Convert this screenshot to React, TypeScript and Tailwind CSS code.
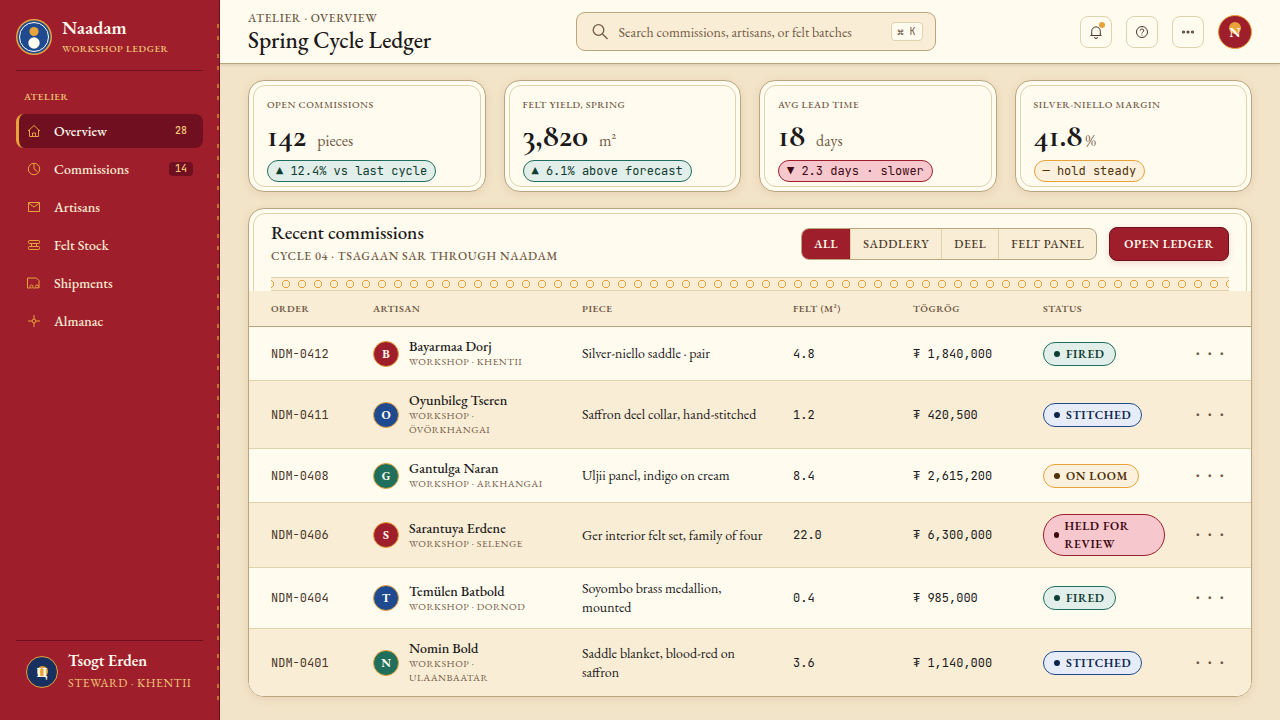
import React, { useState } from 'react';

type Tone = 'jade' | 'indigo' | 'saffron' | 'blood';
type AvatarColor = 'red' | 'blue' | 'green';

interface NavItem {
  label: string;
  icon: React.ReactNode;
  count?: number;
}

interface Stat {
  label: string;
  value: string;
  unit: string;
  tight?: boolean;
  trend: string;
  tone: Tone;
}

interface Commission {
  id: string;
  artisan: string;
  workshop: string;
  color: AvatarColor;
  piece: string;
  felt: string;
  price: string;
  status: string;
  tone: Tone;
}

const toneClass: Record<Tone, string> = {
  jade: 'border-[#1f6f5c] bg-[#e2eeea] text-[#0f3d31]',
  indigo: 'border-[#1f4a8f] bg-[#e6edf8] text-[#10244d]',
  saffron: 'border-[#e8a33a] bg-[#fdf1de] text-[#4f3208]',
  blood: 'border-[#9e1f2b] bg-[#f6c8ce] text-[#3f0812]',
};

const avatarClass: Record<AvatarColor, string> = {
  red: 'bg-[#9e1f2b]',
  blue: 'bg-[#1f4a8f]',
  green: 'bg-[#1f6f5c]',
};

const NavIcon = ({ children }: { children: React.ReactNode }) => (
  <svg width="14" height="14" viewBox="0 0 14 14" fill="none" stroke="currentColor" strokeWidth="1" className="shrink-0 text-[#e8a33a]" aria-hidden="true">
    {children}
  </svg>
);

const navItems: NavItem[] = [
  {
    label: 'Overview',
    count: 28,
    icon: <NavIcon><path d="M1 7 7 1.500 13 7M2.500 6v6.500h9V6M5.500 12.500V9h3v3.500" /></NavIcon>,
  },
  {
    label: 'Commissions',
    count: 14,
    icon: <NavIcon><circle cx="7" cy="7" r="5.700" /><path d="M7 1.300V7l3.500 2.500" /></NavIcon>,
  },
  {
    label: 'Artisans',
    icon: <NavIcon><path d="M1.500 2.500h11v9h-11zM1.500 3l5.500 4 5.500-4" /></NavIcon>,
  },
  {
    label: 'Felt Stock',
    icon: (
      <NavIcon>
        <rect x="1.500" y="2.500" width="11" height="3" rx="0.800" />
        <rect x="1.500" y="8.500" width="11" height="3" rx="0.800" />
        <path d="M4.500 5.500v3M9.500 5.500v3" />
      </NavIcon>
    ),
  },
  {
    label: 'Shipments',
    icon: (
      <NavIcon>
        <path d="M3 12H.5V2H9.500l2.500 2.500V12h-.5M6 12h2.500" />
        <circle cx="4.500" cy="10.500" r="1.500" />
        <circle cx="10" cy="10.500" r="1.500" />
      </NavIcon>
    ),
  },
  {
    label: 'Almanac',
    icon: <NavIcon><circle cx="7" cy="7" r="1.900" /><path d="M7 1v4M7 9v4M1 7h4M9 7h4" /></NavIcon>,
  },
];

const stats: Stat[] = [
  { label: 'Open commissions', value: '142', unit: 'pieces', trend: '▲ 12.4% vs last cycle', tone: 'jade' },
  { label: 'Felt yield, spring', value: '3,820', unit: 'm²', trend: '▲ 6.1% above forecast', tone: 'jade' },
  { label: 'Avg lead time', value: '18', unit: 'days', trend: '▼ 2.3 days · slower', tone: 'blood' },
  { label: 'Silver-niello margin', value: '41.8', unit: '%', tight: true, trend: '— hold steady', tone: 'saffron' },
];

const filters = ['All', 'Saddlery', 'Deel', 'Felt panel'];

const commissions: Commission[] = [
  { id: 'NDM-0412', artisan: 'Bayarmaa Dorj', workshop: 'Khentii', color: 'red', piece: 'Silver-niello saddle · pair', felt: '4.8', price: '1,840,000', status: 'Fired', tone: 'jade' },
  { id: 'NDM-0411', artisan: 'Oyunbileg Tseren', workshop: 'Övörkhangai', color: 'blue', piece: 'Saffron deel collar, hand-stitched', felt: '1.2', price: '420,500', status: 'Stitched', tone: 'indigo' },
  { id: 'NDM-0408', artisan: 'Gantulga Naran', workshop: 'Arkhangai', color: 'green', piece: 'Uljii panel, indigo on cream', felt: '8.4', price: '2,615,200', status: 'On loom', tone: 'saffron' },
  { id: 'NDM-0406', artisan: 'Sarantuya Erdene', workshop: 'Selenge', color: 'red', piece: 'Ger interior felt set, family of four', felt: '22.0', price: '6,300,000', status: 'Held for review', tone: 'blood' },
  { id: 'NDM-0404', artisan: 'Temülen Batbold', workshop: 'Dornod', color: 'blue', piece: 'Soyombo brass medallion, mounted', felt: '0.4', price: '985,000', status: 'Fired', tone: 'jade' },
  { id: 'NDM-0401', artisan: 'Nomin Bold', workshop: 'Ulaanbaatar', color: 'green', piece: 'Saddle blanket, blood-red on saffron', felt: '3.6', price: '1,140,000', status: 'Stitched', tone: 'indigo' },
];

const Sidebar = ({ active, onSelect }: { active: string; onSelect: (label: string) => void }) => (
  <aside className="relative flex w-[220px] shrink-0 flex-col border-r border-[#6f0f1f] bg-[#9e1f2b] px-4 text-[#fffbef]">
    {/* saddle stitch along the right edge */}
    <div className="absolute top-6 right-0 bottom-5 w-[2px] bg-[repeating-linear-gradient(to_bottom,#c7702f_0_4px,transparent_4px_12px,#c7702f_12px_16px,transparent_16px_30px)]" />

    <div className="flex items-center gap-[10px] border-b border-[#6f0f1f] pt-4 pb-3">
      <svg width="36" height="36" viewBox="0 0 36 36" className="shrink-0" aria-hidden="true">
        <circle cx="18" cy="18" r="18" fill="#e8a33a" />
        <circle cx="18" cy="18" r="16.500" fill="#1f4a8f" />
        <circle cx="18" cy="18" r="14.500" fill="none" stroke="#fffbef" strokeWidth="1" />
        <circle cx="18" cy="12.500" r="4.600" fill="#e8a33a" />
        <circle cx="18" cy="24" r="5.700" fill="#fffbef" />
      </svg>
      <div>
        <div className="text-[19px] leading-6 font-semibold">Naadam</div>
        <div className="text-[10px] leading-[18px] font-medium tracking-wider text-[#f2c879] uppercase">Workshop Ledger</div>
      </div>
    </div>

    <div className="px-2 pt-4 pb-[7px] text-[10px] leading-5 font-medium tracking-wider text-[#f2c879] uppercase">Atelier</div>
    <nav className="flex flex-col gap-1">
      {navItems.map((item) => (
        <a
          key={item.label}
          href="#"
          onClick={() => onSelect(item.label)}
          className={`flex h-[34px] items-center gap-[13px] rounded-lg border-l-[3px] pr-[10px] pl-2 text-sm font-medium ${
            active === item.label ? 'border-[#e8a33a] bg-[#6f0f1f] text-[#fffbef]' : 'border-transparent text-[#f9edd5]'
          }`}
        >
          {item.icon}
          <span className="flex-1">{item.label}</span>
          {item.count && (
            <span className="rounded bg-[#6f0f1f] px-[6px] font-['JetBrains_Mono','Liberation_Mono',monospace] text-[10px] leading-[14px] text-[#f2c879]">
              {item.count}
            </span>
          )}
        </a>
      ))}
    </nav>

    <div className="mt-auto flex items-center gap-[10px] border-t border-[#6f0f1f] px-[10px] pt-[9px] pb-[26px]">
      <div className="relative grid size-8 shrink-0 place-items-center rounded-full border border-[#e8a33a] bg-[#17305f]">
        <span className="absolute top-[9px] size-[11px] rounded-full bg-[#e8a33a]" />
        <span className="relative text-sm leading-none font-bold">Ц</span>
      </div>
      <div className="whitespace-nowrap">
        <div className="text-base leading-[22px] font-semibold">Tsogt Erden</div>
        <div className="text-xs leading-[22px] tracking-wider text-[#f2c879] uppercase">Steward · Khentii</div>
      </div>
    </div>
  </aside>
);

const iconButton = 'relative grid size-8 place-items-center rounded-lg border border-[#e0d2ad] text-[#4a3728]';

const Header = () => (
  <header className="relative flex h-16 items-center justify-between border-b border-[#b9a67e] bg-[#fffbef] px-7 shadow-[0_1px_3px_rgba(74,55,40,0.15)]">
    <div>
      <div className="text-xs leading-4 font-medium tracking-wider text-[#725a45] uppercase">Atelier · Overview</div>
      <h1 className="text-[23px] leading-7 font-medium text-[#1c1a1a]">Spring Cycle Ledger</h1>
    </div>

    <label className="flex h-[39px] w-[360px] items-center gap-[10px] rounded-[9px] border border-[#b9a67e] bg-[#f9edd5] pr-3 pl-[15px] text-[#725a45]">
      <svg width="17" height="17" viewBox="0 0 17 17" fill="none" stroke="currentColor" strokeWidth="1.300" aria-hidden="true">
        <circle cx="6.500" cy="7" r="5.300" />
        <path d="m10.500 11 5 5" />
      </svg>
      <input
        type="search"
        aria-label="Search"
        placeholder="Search commissions, artisans, or felt batches"
        className="min-w-0 flex-1 bg-transparent text-sm outline-none placeholder:text-[#725a45]"
      />
      <kbd className="rounded border border-[#e0d2ad] bg-[#fffbef] px-[6px] font-['JetBrains_Mono','Liberation_Mono',monospace] text-[10px] leading-[17px]">⌘ K</kbd>
    </label>

    <div className="flex items-center gap-[14px]">
      <button type="button" aria-label="Notifications" className={iconButton}>
        <svg width="14" height="14" viewBox="0 0 14 14" fill="none" stroke="currentColor" strokeWidth="1">
          <path d="M1.500 10.500h11M2.700 10.500V6.200a4.300 4.300 0 0 1 8.600 0v4.300M5.500 12a1.500 1.500 0 0 0 3 0" />
        </svg>
        <span className="absolute top-[5px] right-[6px] size-[6px] rounded-full bg-[#e8a33a]" />
      </button>
      <button type="button" aria-label="Help" className={iconButton}>
        <svg width="14" height="14" viewBox="0 0 14 14" fill="none" stroke="currentColor" strokeWidth="1">
          <circle cx="7" cy="7" r="5.500" />
          <path d="M5.300 5.600a1.700 1.700 0 1 1 2.500 1.500c-.6.300-.8.600-.8 1.300M7 9.600v.9" />
        </svg>
      </button>
      <button type="button" aria-label="More" className={iconButton}>
        <svg width="14" height="14" viewBox="0 0 14 14" fill="none" stroke="currentColor" strokeWidth="1.100">
          <circle cx="2.500" cy="7" r="1" />
          <circle cx="7" cy="7" r="1" />
          <circle cx="11.500" cy="7" r="1" />
        </svg>
      </button>
      <div className="relative grid size-[34px] place-items-center rounded-full border border-[#e8a33a] bg-[#9e1f2b]">
        <span className="absolute top-[6px] size-3 rounded-full bg-[#e8a33a]" />
        <span className="relative text-sm leading-none font-bold text-[#fffbef]">N</span>
      </div>
    </div>
  </header>
);

const StatCard = ({ stat }: { stat: Stat }) => (
  <section className="relative rounded-2xl border border-[#b9a67e] bg-[#fffbef] px-[18px] pt-4 pb-[7px] shadow-[0_2px_8px_rgba(158,80,40,0.12)]">
    <div className="pointer-events-none absolute inset-1 rounded-xl border border-[#e0d2ad]" />
    <h2 className="text-[10px] leading-4 font-medium tracking-wider text-[#725a45] uppercase">{stat.label}</h2>
    <div className={`flex items-baseline pt-[2px] pb-[3px] ${stat.tight ? 'gap-[3px]' : 'gap-[11px]'}`}>
      <span className="font-['Cormorant_Garamond','EB_Garamond','Liberation_Serif',serif] text-[33px] leading-[42px] font-bold text-[#1c1a1a]">{stat.value}</span>
      <span className="text-base text-[#725a45]">{stat.unit}</span>
    </div>
    <span className={`inline-block rounded-full border px-2 align-top font-['JetBrains_Mono','Liberation_Mono',monospace] text-xs leading-5 whitespace-nowrap ${toneClass[stat.tone]}`}>
      {stat.trend}
    </span>
  </section>
);

const CommissionRow = ({ row }: { row: Commission }) => (
  <tr className="border-b border-[#e0d2ad] last:border-b-0 even:bg-[#f9edd5]">
    <td className="py-[11px] pr-3 pl-[22px] font-['JetBrains_Mono','Liberation_Mono',monospace] text-xs text-[#4a3728]">{row.id}</td>
    <td className="py-[11px] pr-5 pl-3">
      <div className="flex items-center gap-[10px]">
        <span className={`grid size-[26px] shrink-0 place-items-center rounded-full border border-[#e8a33a] text-xs leading-none font-bold text-[#fffbef] ${avatarClass[row.color]}`}>
          {row.artisan[0]}
        </span>
        <div>
          <div className="text-sm leading-[17px] font-medium">{row.artisan}</div>
          <div className="text-[10px] leading-[14px] tracking-wider text-[#725a45] uppercase">Workshop · {row.workshop}</div>
        </div>
      </div>
    </td>
    <td className="px-3 py-[11px] text-sm leading-[19px]">{row.piece}</td>
    <td className="px-3 py-[11px] font-['JetBrains_Mono','Liberation_Mono',monospace] text-xs">{row.felt}</td>
    <td className="px-3 py-[11px] font-['JetBrains_Mono','Liberation_Mono',monospace] text-xs">₮ {row.price}</td>
    <td className="px-3 py-[11px]">
      <span className={`inline-flex items-center gap-[6px] rounded-3xl border px-[10px] py-[2px] align-top text-xs leading-[18px] font-semibold tracking-wider uppercase ${toneClass[row.tone]}`}>
        <span className="size-[6px] rounded-full bg-current" />
        {row.status}
      </span>
    </td>
    <td className="py-[11px] pr-[22px] text-right">
      <button type="button" aria-label={`Actions for ${row.id}`} className="font-['JetBrains_Mono','Liberation_Mono',monospace] text-base leading-4 tracking-[0.15em] whitespace-nowrap text-[#725a45]">
        ···
      </button>
    </td>
  </tr>
);

const App: React.FC = () => {
  const [activeNav, setActiveNav] = useState('Overview');
  const [filter, setFilter] = useState('All');

  return (
    <div className="flex min-h-screen bg-[#f2e4c8] font-['EB_Garamond','Liberation_Serif',serif] text-[#1c1a1a]">
      <Sidebar active={activeNav} onSelect={setActiveNav} />
      <div className="min-w-0 flex-1">
        <Header />
        <main className="flex flex-col gap-4 px-7 pt-4 pb-5">
          <div className="grid grid-cols-4 gap-[18px]">
            {stats.map((stat) => <StatCard key={stat.label} stat={stat} />)}
          </div>

          <section className="relative overflow-hidden rounded-2xl border border-[#b9a67e] bg-[#fffbef] shadow-[0_2px_8px_rgba(158,80,40,0.12)]">
            <div className="pointer-events-none absolute inset-1 rounded-xl border border-[#e0d2ad]" />
            <div className="relative px-[22px]">
              <div className="flex items-center justify-between pt-3 pb-[10px]">
                <div>
                  <h2 className="text-[19px] leading-6 font-medium">Recent commissions</h2>
                  <p className="text-xs leading-[22px] font-medium tracking-wider text-[#725a45] uppercase lining-nums">Cycle 04 · Tsagaan Sar through Naadam</p>
                </div>
                <div className="flex items-center gap-3">
                  <div className="flex divide-x divide-[#e0d2ad] overflow-hidden rounded-lg border border-[#b9a67e] bg-[#f9edd5]">
                    {filters.map((name) => (
                      <button
                        key={name}
                        type="button"
                        onClick={() => setFilter(name)}
                        className={`px-3 text-xs leading-[30px] tracking-wider uppercase ${
                          filter === name ? 'bg-[#9e1f2b] font-semibold text-[#fffbef]' : 'font-medium text-[#4a3728]'
                        }`}
                      >
                        {name}
                      </button>
                    ))}
                  </div>
                  <button type="button" className="rounded-lg border border-[#6f0f1f] bg-[#9e1f2b] px-[14px] text-xs leading-8 font-semibold tracking-wider text-[#fffbef] uppercase shadow-[0_2px_6px_rgba(158,31,43,0.15)]">
                    Open ledger
                  </button>
                </div>
              </div>
              <div className="h-[14px] border-y border-[#e0d2ad] bg-[#f9edd5] bg-[radial-gradient(circle,transparent_3px,#e8a33a_3px,#e8a33a_4px,transparent_4px)] bg-[length:16px_12px] bg-center" />
            </div>

            <table className="relative w-full table-fixed text-left">
              <colgroup>
                <col className="w-28" />
                <col className="w-[209px]" />
                <col />
                <col className="w-[120px]" />
                <col className="w-[130px]" />
                <col className="w-[146px]" />
                <col className="w-[74px]" />
              </colgroup>
              <thead className="border-b border-[#b9a67e] bg-[#f9edd5] text-[10px] leading-[35px] tracking-wider text-[#725a45] uppercase lining-nums">
                <tr>
                  <th className="pr-3 pl-[22px] font-semibold">Order</th>
                  <th className="px-3 font-semibold">Artisan</th>
                  <th className="px-3 font-semibold">Piece</th>
                  <th className="px-3 font-semibold">Felt (m²)</th>
                  <th className="px-3 font-semibold">Tögrög</th>
                  <th className="px-3 font-semibold">Status</th>
                  <th aria-label="Actions" />
                </tr>
              </thead>
              <tbody className="bg-[#fffbef]">
                {commissions.map((row) => <CommissionRow key={row.id} row={row} />)}
              </tbody>
            </table>
          </section>
        </main>
      </div>
    </div>
  );
};

export default App;
